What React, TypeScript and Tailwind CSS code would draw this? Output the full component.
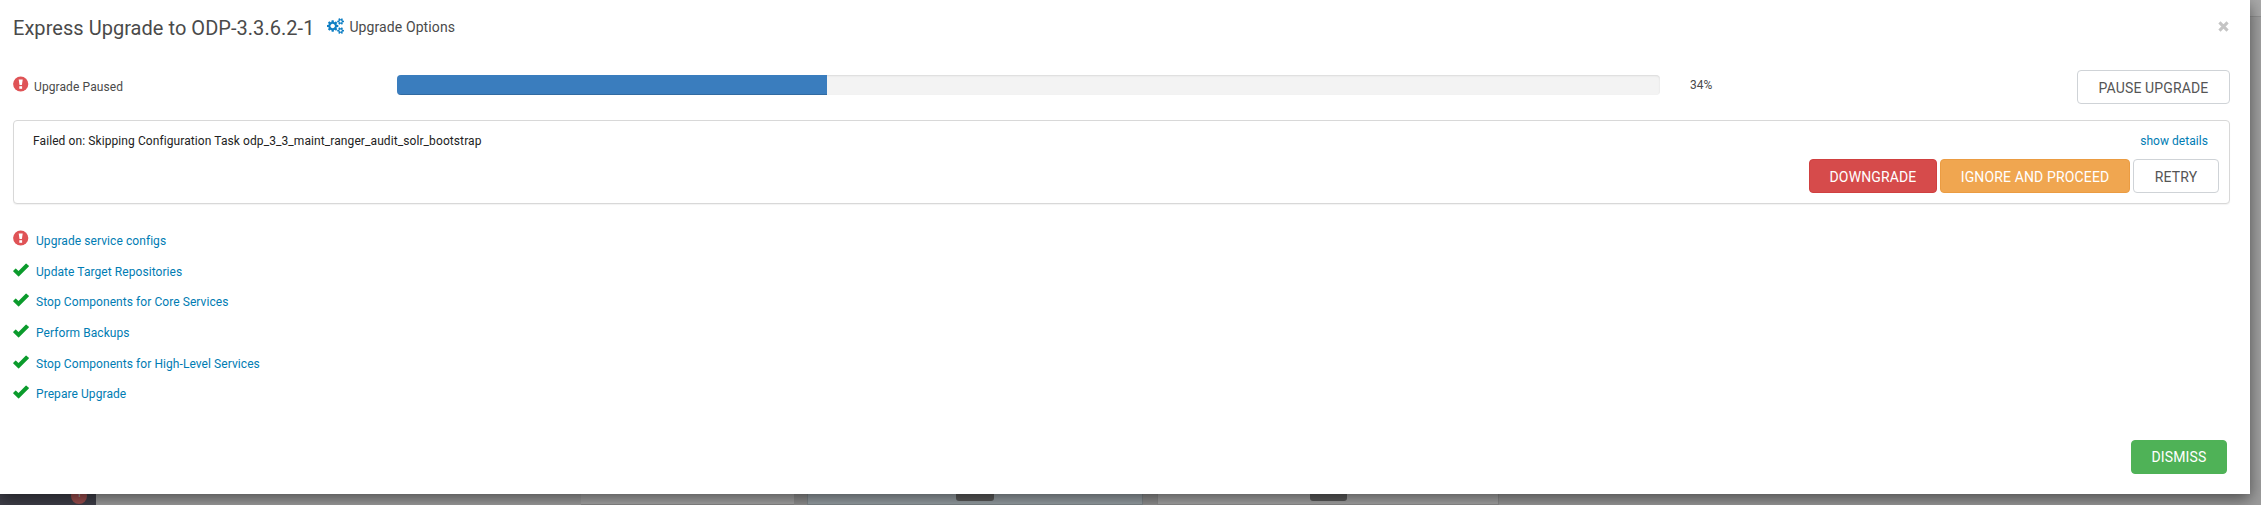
import type { ReactNode } from "react";

type Status = "failed" | "done";

const groups: { label: string; status: Status; height: string }[] = [
  { label: "Upgrade service configs", status: "failed", height: "h-[31px]" },
  { label: "Update Target Repositories", status: "done", height: "h-[30px]" },
  { label: "Stop Components for Core Services", status: "done", height: "h-[31px]" },
  { label: "Perform Backups", status: "done", height: "h-[31px]" },
  { label: "Stop Components for High-Level Services", status: "done", height: "h-[30px]" },
  { label: "Prepare Upgrade", status: "done", height: "h-[31px]" },
];

function ErrorIcon() {
  return (
    <svg viewBox="0 0 16 16" className="h-4 w-4 shrink-0" aria-hidden="true">
      <circle cx="7.7" cy="8" r="7.6" fill="#df5356" />
      <path d="M5.700 3.400h4L8.900 9H6.500z" fill="#fff" />
      <rect x="6.300" y="10.200" width="2.800" height="2.600" fill="#fff" />
    </svg>
  );
}

function CheckIcon() {
  return (
    <svg viewBox="0 0 16 14" className="mt-0.5 h-3.5 w-4 shrink-0" aria-hidden="true">
      <path
        d="M.3 7.700 2.300 5.800q.4-.4.8 0L5.500 8 12.700.7q.4-.4.8 0L15.800 2.700q.4.4 0 .8L6 13.200q-.4.4-.8 0L.3 8.500q-.4-.4 0-.8z"
        fill="#0b9b2c"
      />
    </svg>
  );
}

function CogsIcon() {
  return (
    <svg viewBox="0 0 1920 1792" className="mb-[3px] ml-[13px] h-4 w-[17px] shrink-0" fill="#0f7fc4" aria-hidden="true">
      <path d="M896 896q0-106-75-181t-181-75-181 75-75 181 75 181 181 75 181-75 75-181zm768 512q0-52-38-90t-90-38-90 38-38 90q0 53 37.500 90.500t90.500 37.500 90.500-37.500 37.500-90.500zm0-1024q0-52-38-90t-90-38-90 38-38 90q0 53 37.500 90.500t90.500 37.500 90.500-37.500 37.500-90.500zm-384 421v185q0 10-7 19.500t-16 10.500l-155 24q-11 35-32 76 34 48 90 115 7 11 7 20 0 12-7 19-23 30-82.500 89.500t-78.500 59.500q-11 0-21-7l-115-90q-37 19-77 31-11 108-23 155-7 24-30 24h-186q-11 0-20-7.500t-10-17.500l-23-153q-34-10-75-31l-118 89q-7 7-20 7-11 0-21-8-144-133-144-160 0-9 7-19 10-14 41-53t47-61q-23-44-35-82l-152-24q-10-1-17-9.500t-7-19.500v-185q0-10 7-19.500t16-10.500l155-24q11-35 32-76-34-48-90-115-7-11-7-20 0-12 7-20 22-30 82-89t79-59q11 0 21 7l115 90q34-18 77-32 11-108 23-154 7-24 30-24h186q11 0 20 7.500t10 17.500l23 153q34 10 75 31l118-89q8-7 20-7 11 0 21 8 144 133 144 160 0 8-7 19-12 16-42 54t-45 60q23 48 34 82l152 23q10 2 17 10.500t7 19.500zm640 533v140q0 16-149 31-12 27-30 52 51 113 51 138 0 4-4 7-122 71-124 71-8 0-46-47t-52-68q-20 2-30 2t-30-2q-14 21-52 68t-46 47q-2 0-124-71-4-3-4-7 0-25 51-138-18-25-30-52-149-15-149-31v-140q0-16 149-31 13-29 30-52-51-113-51-138 0-4 4-7 4-2 35-20t59-34 30-16q8 0 46 46.500t52 67.500q20-2 30-2t30 2q51-71 92-112l6-2q4 0 124 70 4 3 4 7 0 25-51 138 17 23 30 52 149 15 149 31zm0-1024v140q0 16-149 31-12 27-30 52 51 113 51 138 0 4-4 7-122 71-124 71-8 0-46-47t-52-68q-20 2-30 2t-30-2q-14 21-52 68t-46 47q-2 0-124-71-4-3-4-7 0-25 51-138-18-25-30-52-149-15-149-31v-140q0-16 149-31 13-29 30-52-51-113-51-138 0-4 4-7 4-2 35-20t59-34 30-16q8 0 46 46.500t52 67.500q20-2 30-2t30 2q51-71 92-112l6-2q4 0 124 70 4 3 4 7 0 25-51 138 17 23 30 52 149 15 149 31z" />
    </svg>
  );
}

function Button({ className, children }: { className: string; children: ReactNode }) {
  return (
    <button
      type="button"
      className={`h-[34px] shrink-0 rounded-[4px] border text-center text-[14px] tracking-[0.14px] whitespace-nowrap ${className}`}
    >
      {children}
    </button>
  );
}

// dimmed dashboard that stays visible under the dialog
function Backdrop() {
  return (
    <div className="absolute inset-0 flex flex-col bg-[#a0a0a0]">
      <div className="h-[17px] border-b border-[#919191] bg-[#a9a9a9]" />
      <div className="flex-1" />
      <div className="flex h-[25px] overflow-hidden">
        <div className="flex w-24 items-end bg-[#40404a] pb-px pl-[71px]">
          <span className="h-4 w-4 rounded-full bg-[#a25151] text-center text-[10px] leading-3 text-[#b5b5b5]">
            1
          </span>
        </div>
        <div className="w-[485px] bg-[#a0a0a0]" />
        <div className="w-[213px] border-b border-[#8a8a8a] bg-[#a9a9a9]" />
        <div className="w-[13px] bg-[#949494]" />
        <div className="flex w-[336px] justify-center border border-t-0 border-[#838b8f] bg-[#9ba4a9]">
          <span className="h-[21px] w-[38px] rounded-[3px] bg-[#5e5e5e]" />
        </div>
        <div className="w-[14px] bg-[#949494]" />
        <div className="flex w-[342px] border border-t-0 border-[#909090] bg-[#a9a9a9] pl-[152px]">
          <span className="h-[21px] w-[37px] rounded-[3px] bg-[#5e5e5e]" />
        </div>
        <div className="flex-1 bg-[#9c9c9c]" />
      </div>
    </div>
  );
}

export default function App() {
  return (
    <div className="relative h-[505px] w-[2261px] overflow-hidden font-['Roboto',sans-serif] text-[#4a4a4a]">
      <Backdrop />

      <div className="relative flex h-[494px] w-[2250px] flex-col bg-white pr-5 pl-[13px] shadow-[0_5px_15px_rgba(0,0,0,0.5)]">
        <header className="flex h-[55px] items-center">
          <h4 className="text-[20px] leading-none tracking-[0.04px]">Express Upgrade to ODP-3.3.6.2-1</h4>
          <CogsIcon />
          <span className="ml-[5px] text-[14px] tracking-[0.1px]">Upgrade Options</span>
          <button type="button" aria-label="Close" className="mr-px mb-[3px] ml-auto text-[#c4c4c4]">
            <svg viewBox="0 0 10 10" className="h-[11px] w-[11px]" aria-hidden="true">
              <path d="m1.300 1.300 7.400 7.400m0-7.400-7.400 7.400" stroke="currentColor" strokeWidth="2.800" />
            </svg>
          </button>
        </header>

        <div className="flex h-[65px] items-start pt-[15px]">
          <div className="flex w-96 items-start pt-1.5">
            <ErrorIcon />
            <span className="ml-[5px] pt-[3px] text-[12px] leading-4 tracking-[0.1px]">Upgrade Paused</span>
          </div>
          <div className="mt-[5px] h-5 w-[1263px] overflow-hidden rounded-[4px] bg-[#f3f3f3] shadow-[inset_0_1px_2px_rgba(0,0,0,0.1)]">
            <div className="h-full w-[430px] bg-[#3a7dbe] shadow-[inset_0_-1px_0_rgba(0,0,0,0.15)]" />
          </div>
          <span className="ml-[30px] pt-[7px] text-[12px] leading-4">34%</span>
          <Button className="ml-auto w-[153px] border-[#cfd3d7] bg-white leading-[34px] text-[#555]">
            PAUSE UPGRADE
          </Button>
        </div>

        <section className="flex h-[84px] flex-col rounded-[4px] border border-[#d8d8d8] bg-white shadow-[0_1px_1px_rgba(0,0,0,0.05)]">
          <div className="flex justify-between pt-3 pr-[21px] pl-[19px] text-[12px] leading-4">
            <span className="tracking-[0.09px] text-[#222]">
              Failed on: Skipping Configuration Task odp_3_3_maint_ranger_audit_solr_bootstrap
            </span>
            <a className="tracking-[0.05px] text-[#007cb3]">show details</a>
          </div>
          <div className="mt-2.5 flex justify-end gap-[3px] pr-2.5">
            <Button className="w-[128px] border-[#d04040] bg-[#d64b4b] leading-[34px] text-white">DOWNGRADE</Button>
            <Button className="w-[190px] border-[#eb9c42] bg-[#f0a650] leading-[34px] text-white">
              IGNORE AND PROCEED
            </Button>
            <Button className="w-[86px] border-[#cfd3d7] bg-white leading-[34px] text-[#555]">RETRY</Button>
          </div>
        </section>

        <ul className="mt-[26px]">
          {groups.map(({ label, status, height }) => (
            <li key={label} className={`flex items-start ${height}`}>
              {status === "failed" ? <ErrorIcon /> : <CheckIcon />}
              <a className="ml-[7px] pt-[3px] text-[12px] leading-4 tracking-[0.07px] text-[#007cb3]">{label}</a>
            </li>
          ))}
        </ul>

        <footer className="mt-auto flex justify-end pr-[3px] pb-5">
          <Button className="w-24 border-[#4fb257] bg-[#4fb257] leading-[32px] text-white">DISMISS</Button>
        </footer>
      </div>
    </div>
  );
}
